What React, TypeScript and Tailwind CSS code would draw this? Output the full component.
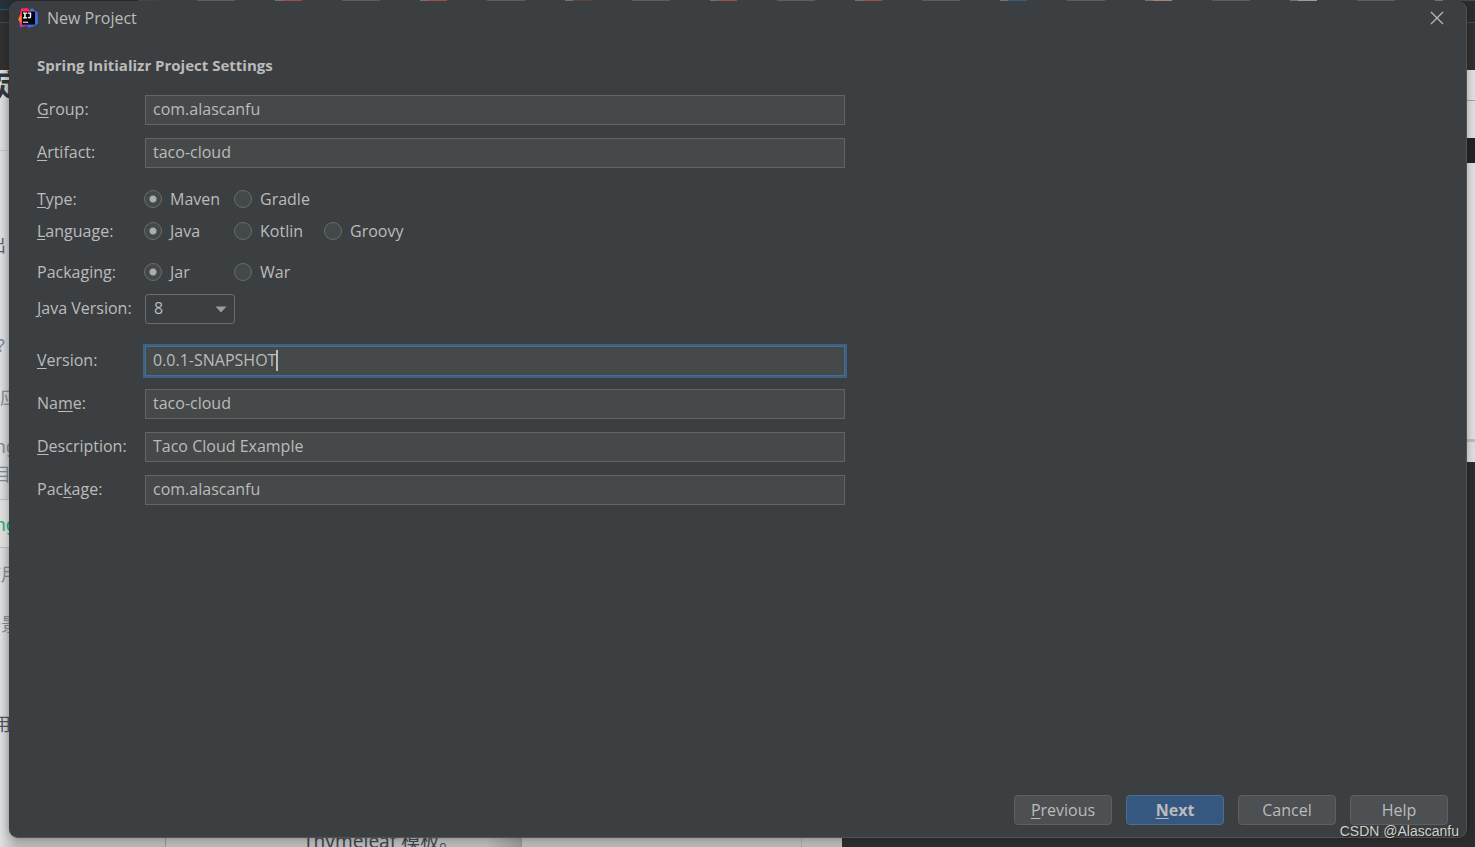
import type { ReactNode } from "react";

function Mnemonic({ text, at }: { text: string; at: number }) {
  return (
    <>
      {text.slice(0, at)}
      <span className="underline decoration-1 underline-offset-2">{text[at]}</span>
      {text.slice(at + 1)}
    </>
  );
}

function Row({ id, label, at, children }: { id: string; label: string; at: number; children: ReactNode }) {
  return (
    <div className="flex h-[30px] items-center">
      <label htmlFor={id} className="w-[108px] shrink-0 pb-0.5 whitespace-nowrap">
        <Mnemonic text={label} at={at} />
      </label>
      {children}
    </div>
  );
}

function TextField({ id, label, at, value, focused = false }: { id: string; label: string; at: number; value: string; focused?: boolean }) {
  return (
    <Row id={id} label={label} at={at}>
      <div className="relative h-[30px] min-w-0 flex-1">
        <input
          id={id}
          type="text"
          defaultValue={value}
          className={
            focused
              ? "h-full w-full border border-[#466d94] bg-[#45494a] px-[7px] pb-0.5 caret-transparent outline-2 outline-[#3d6185]"
              : "h-full w-full border border-[#646464] bg-[#45494a] px-[7px] pb-0.5 outline-none"
          }
        />
        {focused && <span className="absolute top-1 left-[131px] h-[21px] w-[2px] bg-[#bbbbbb]" />}
      </div>
    </Row>
  );
}

function RadioRow({ name, label, at, options }: { name: string; label: string; at: number; options: string[] }) {
  return (
    <div role="radiogroup" aria-label={label} className="flex h-8 items-center">
      <span className="w-[107px] shrink-0">
        <Mnemonic text={label} at={at} />
      </span>
      {options.map((option, i) => (
        <label key={option} className="flex w-[90px] shrink-0 items-center gap-2">
          <input
            type="radio"
            name={name}
            defaultChecked={i === 0}
            className="size-[18px] shrink-0 appearance-none rounded-full border border-[#6b6b6b] bg-[#43494a] checked:bg-[radial-gradient(circle,#adadad_3px,#43494a_4px)]"
          />
          {option}
        </label>
      ))}
    </div>
  );
}

function DialogButton({ children, primary = false }: { children: ReactNode; primary?: boolean }) {
  return (
    <button
      type="button"
      className={
        primary
          ? "h-[30px] w-[98px] rounded border border-[#4c708c] bg-[#365880] font-bold"
          : "h-[30px] w-[98px] rounded border border-[#5e6060] bg-[#4c5052]"
      }
    >
      {children}
    </button>
  );
}

function Logo() {
  return (
    <svg viewBox="0 0 20 20" className="size-5" aria-hidden="true">
      <defs>
        <linearGradient id="pink" x1="0" y1="0" x2="0.4" y2="1">
          <stop offset="0" stopColor="#ff3168" />
          <stop offset="0.5" stopColor="#fe2857" />
          <stop offset="1" stopColor="#a936c9" />
        </linearGradient>
        <linearGradient id="blue" x1="0" y1="0" x2="1" y2="1">
          <stop offset="0" stopColor="#1d8cf3" />
          <stop offset="0.45" stopColor="#6256dc" />
          <stop offset="1" stopColor="#1c7bf0" />
        </linearGradient>
      </defs>
      <path d="M11.5 2 14 .2l5.8 4.2.2 11-4.4 3.2-5.4 1.2-2-4Z" fill="url(#blue)" />
      <path d="M3.2.4 10 .2 12.8 5 7 16l2.2 1.6-7 1.8L1 13l1-7Z" fill="url(#pink)" />
      <path d="M2 7.5 0 11.8 3.6 15V7.5Z" fill="#fc801d" />
      <path d="M4 3.6h13v13H4Z" fill="#050505" />
      <path d="M5 4.6h4v1.2H7.7v3.4H9v1.2H5V9.2h1.2V5.800H5Zm4.800 0h3.400v4c0 1.200-.7 1.900-1.900 1.900-.8 0-1.300-.3-1.700-.8l.8-1c.3.3.5.5.8.5.4 0 .6-.2.6-.7V5.800H9.800Z" fill="#fff" />
      <path d="M5 13.600h5.200v1.400H5Z" fill="#bbb" />
    </svg>
  );
}

const tabMarks = [
  "bg-[#515151]",
  "bg-[#b95c49]",
  "bg-[#b95c49]",
  "bg-[#754e46]",
  "bg-[#b95c49]",
  "bg-[#b95c49]",
  "bg-[#3c6f9d]",
  "bg-[#c4968d]",
  "bg-[#b5b8b5]",
];

function Desktop() {
  return (
    <div aria-hidden="true" className="absolute inset-0 overflow-hidden bg-[#2c2d2f] font-['Noto_Sans','Noto_Sans_CJK_SC',sans-serif] text-[18px] leading-6 text-[#7c8896]">
      <div className="absolute top-0 left-[138px] flex h-px w-full bg-[#4a4a4a]">
        {tabMarks.map((mark, i) => (
          <span key={i} className="flex w-[145px] shrink-0 gap-10">
            <span className={`h-px w-5 ${mark}`} />
            <span className="h-px w-10 bg-[#6b6d6d]" />
            <span className="h-px w-2 bg-[#858585]" />
          </span>
        ))}
      </div>
      <div className="absolute top-0 left-0 h-[10px] w-3 border-b border-[#1b5c70] bg-[#263238]" />
      <div className="absolute top-[22px] left-0 h-[48px] w-full border-t border-[#484848] bg-[#303030]" />
      <div className="absolute top-[70px] bottom-0 left-0 w-[842px] bg-gradient-to-r from-[#dedfe1] from-0% to-[#b7b7b7] to-2%">
        <div className="absolute top-20 left-0 w-3 border-t border-[#b9c5d0]" />
        <div className="absolute top-[429px] left-0 h-[49px] w-3 border-y border-[#b5bbc1] bg-[#dedede]" />
        <div className="absolute bottom-0 left-[165px] h-[9px] w-[357px] border-x border-[#8f8f8f] bg-gradient-to-r from-[#b8b8b8] from-90% to-[#969696]" />
        <div className="absolute bottom-0 left-[801px] h-[9px] border-l border-[#a2a2a2]" />
      </div>
      <span className="absolute top-[67px] -left-[5px] text-[30px] leading-9 font-bold text-[#30363d]">定</span>
      <span className="absolute top-[233px] -left-[12px] text-[#596270]">出</span>
      <span className="absolute top-[333px] -left-[3px]">?</span>
      <span className="absolute top-[385px] left-0">应</span>
      <span className="absolute top-[434px] -left-[10px]">ing</span>
      <span className="absolute top-[462px] -left-[7px]">目</span>
      <span className="absolute top-[512px] -left-[10px] text-[#22ad79]">ing</span>
      <span className="absolute top-[562px] -left-[17px]">使用</span>
      <span className="absolute top-[612px] -left-[17px]">场景</span>
      <span className="absolute top-[712px] -left-[7px] text-[#4b535e]">用</span>
      <span className="absolute top-[829px] left-[303px] text-[19px] text-[#3d444d]">Thymeleaf 模板。</span>
      <div className="absolute top-[70px] right-0 h-[392px] w-[9px] bg-[#dfdfdf]">
        <div className="mt-[30px] h-px bg-[#a6a6a6]" />
        <div className="mt-[37px] h-[25px] bg-[#222428]" />
        <div className="mt-[276px] h-[3px] bg-[#bdbdbd]" />
      </div>
    </div>
  );
}

export default function App() {
  return (
    <div className="relative flex h-screen overflow-hidden pt-px pr-2 pb-[9px] pl-[9px] font-['Open_Sans','Noto_Sans_CJK_SC',sans-serif] text-[16px] leading-6 text-[#bbbbbb]">
      <Desktop />
      <main className="relative flex min-w-0 flex-1 flex-col rounded-[9px] border-r border-b border-[#505354] bg-[#3c3f41] shadow-[0_0_8px_rgba(0,0,0,0.3)]">
        <header className="flex h-[34px] shrink-0 items-center gap-[9px] pr-[22px] pl-[9px]">
          <Logo />
          <span className="flex-1">New Project</span>
          <button type="button" aria-label="Close" className="size-[14px]">
            <svg viewBox="0 0 14 14" className="size-[14px]" fill="none" stroke="#bbbbbb" strokeWidth="1.2">
              <path d="m1 1 12 12M13 1 1 13" />
            </svg>
          </button>
        </header>
        <form className="flex min-h-0 max-w-[836px] flex-1 flex-col pl-7">
          <h1 className="mt-[18px] text-[15px] font-bold">Spring Initializr Project Settings</h1>
          <div className="mt-[18px] flex flex-col gap-[13px]">
            <TextField id="group" label="Group:" at={0} value="com.alascanfu" />
            <TextField id="artifact" label="Artifact:" at={0} value="taco-cloud" />
          </div>
          <div className="mt-[15px]">
            <RadioRow name="type" label="Type:" at={0} options={["Maven", "Gradle"]} />
            <RadioRow name="language" label="Language:" at={0} options={["Java", "Kotlin", "Groovy"]} />
          </div>
          <div className="mt-[9px] flex flex-col gap-[6px]">
            <RadioRow name="packaging" label="Packaging:" at={5} options={["Jar", "War"]} />
            <Row id="java-version" label="Java Version:" at={0}>
              <div className="relative h-[30px] w-[90px]">
                <select id="java-version" defaultValue="8" className="h-full w-full appearance-none rounded-[3px] border border-[#6b6b6b] bg-[#3c3f41] px-2 pb-0.5 outline-none">
                  <option>8</option>
                  <option>11</option>
                  <option>17</option>
                </select>
                <svg viewBox="0 0 12 7" className="pointer-events-none absolute top-3 right-2 h-[7px] w-3" aria-hidden="true">
                  <path d="M.5.5h11L6 6.5Z" fill="#9a9da0" />
                </svg>
              </div>
            </Row>
          </div>
          <div className="mt-[22px] flex flex-col gap-[13px]">
            <TextField id="version" label="Version:" at={0} value="0.0.1-SNAPSHOT" focused />
            <TextField id="name" label="Name:" at={2} value="taco-cloud" />
            <TextField id="description" label="Description:" at={0} value="Taco Cloud Example" />
            <TextField id="package" label="Package:" at={3} value="com.alascanfu" />
          </div>
        </form>
        <footer className="flex shrink-0 justify-end gap-[14px] pr-[18px] pb-3">
          <DialogButton><Mnemonic text="Previous" at={0} /></DialogButton>
          <DialogButton primary><Mnemonic text="Next" at={0} /></DialogButton>
          <DialogButton>Cancel</DialogButton>
          <DialogButton>Help</DialogButton>
        </footer>
      </main>
      <span className="absolute right-4 bottom-[6px] font-['Liberation_Sans',sans-serif] text-[14px] leading-5 text-[#d0d0d0] [text-shadow:1px_1px_1px_#222]">CSDN @Alascanfu</span>
    </div>
  );
}
